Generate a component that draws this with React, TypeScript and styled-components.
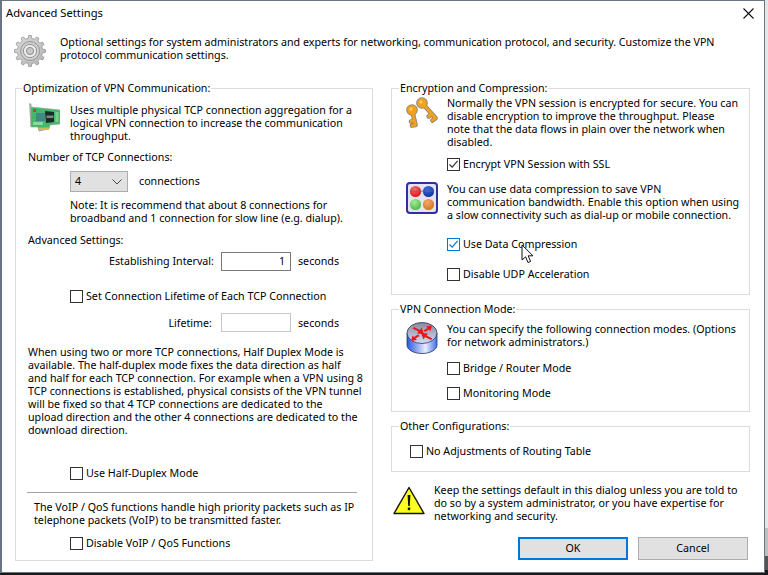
import React from "react";
import styled, { createGlobalStyle } from "styled-components";

const Global = createGlobalStyle`
  html, body { margin: 0; padding: 0; background: #1a1a1a; }
  * { box-sizing: border-box; }
`;

const Desktop = styled.div`
  width: 768px;
  height: 575px;
  overflow: hidden;
  position: relative;
  background:
    linear-gradient(to bottom, #e6e6e6 0, #e6e6e6 528px, #c0c0c0 528px, #c0c0c0 556px, #555 556px, #555 570px, #1a1a1a 570px)
      right top / 3px 100% no-repeat,
    #1a1a1a;
  font-family: "Noto Sans", "Open Sans", sans-serif;
  font-size: 10.7px;
  line-height: 13px;
  color: #000;
`;

const Window = styled.div`
  width: 765px;
  height: 573px;
  background: #fff;
  border: 1px solid #6a7482;
  border-left-width: 2px;
  display: flex;
  flex-direction: column;
`;

const TitleBar = styled.div`
  height: 27px;
  padding: 5px 10px 0 4px;
  display: flex;
  justify-content: space-between;
  align-items: flex-start;
  font-size: 11.2px;
`;

const CloseIcon = styled.svg`
  width: 11px;
  height: 11px;
  margin: 2px 0 0;
`;

const Intro = styled.div`
  display: flex;
  padding-left: 12px;
  gap: 14px;
  height: 32px;
  margin-top: 7px;
`;

const Text = styled.div<{ $top?: number; $left?: number }>`
  white-space: nowrap;
  margin-top: ${(p) => p.$top ?? 0}px;
  margin-left: ${(p) => p.$left ?? 0}px;
`;

const Columns = styled.div`
  display: grid;
  grid-template-columns: 358px 359px;
  column-gap: 18px;
  margin: 15px 0 0 13px;
`;

const Column = styled.div`
  display: flex;
  flex-direction: column;
`;

const Group = styled.fieldset<{ $grow?: boolean; $top?: number }>`
  margin: ${(p) => p.$top ?? 0}px 0 0;
  padding: 0;
  border: 1px solid #dcdcdc;
  min-width: 0;
  height: ${(p) => (p.$grow ? "479px" : "auto")};
`;

const Legend = styled.legend<{ $indent?: number }>`
  margin-left: ${(p) => p.$indent ?? 7}px;
  padding: 0 1px;
  line-height: 13px;
  white-space: nowrap;
`;

const GroupBody = styled.div<{ $left: number; $bottom?: number }>`
  padding: 0 0 ${(p) => p.$bottom ?? 0}px ${(p) => p.$left}px;
`;

const IconRow = styled.div<{ $top: number; $gap?: number }>`
  display: flex;
  align-items: flex-start;
  gap: ${(p) => p.$gap ?? 10}px;
  margin-top: ${(p) => p.$top}px;
`;

const Icon = styled.svg`
  width: 32px;
  height: 32px;
  flex: none;
`;

const CheckRow = styled.label<{ $top: number; $left: number }>`
  display: flex;
  align-items: center;
  gap: 3px;
  height: 14px;
  margin-top: ${(p) => p.$top}px;
  margin-left: ${(p) => p.$left}px;
  white-space: nowrap;
`;

const Box = styled.span<{ $hot?: boolean }>`
  width: 13px;
  height: 13px;
  flex: none;
  border: 1px solid ${(p) => (p.$hot ? "#0078d7" : "#333")};
  color: ${(p) => (p.$hot ? "#0078d7" : "#333")};
  background: #fff;
  display: flex;
`;

const FieldRow = styled.div<{ $top: number; $left?: number }>`
  display: flex;
  align-items: center;
  height: ${(p) => (p.$left ? "auto" : "19px")};
  margin-top: ${(p) => p.$top}px;
  margin-left: ${(p) => p.$left ?? 0}px;
  white-space: nowrap;
`;

const FieldLabel = styled.span<{ $width: number; $drop?: number }>`
  width: ${(p) => p.$width}px;
  margin-top: ${(p) => p.$drop ?? 0}px;
  text-align: right;
`;

const Unit = styled.span<{ $drop?: number }>`
  margin-top: ${(p) => p.$drop ?? 0}px;
`;

const Input = styled.div<{ $disabled?: boolean; $left: number }>`
  width: 70px;
  height: 19px;
  margin: 0 7px 0 ${(p) => p.$left}px;
  border: 1px solid ${(p) => (p.$disabled ? "#c6c6c6" : "#7a7a7a")};
  padding: 0 5px;
  line-height: 17px;
  text-align: right;
`;

const Select = styled.div`
  width: 58px;
  height: 21px;
  margin-right: 11px;
  border: 1px solid #adadad;
  background: #e1e1e1;
  display: flex;
  align-items: center;
  justify-content: space-between;
  padding: 0 5px 0 4px;
`;

const Chevron = styled.svg`
  width: 10px;
  height: 6px;
`;

const Separator = styled.hr`
  width: 330px;
  height: 1px;
  border: 0;
  background: #a0a0a0;
  margin: 12px 0 0 -1px;
`;

const Warning = styled.div`
  display: flex;
  gap: 9px;
  margin: 12px 0 0 2px;
`;

const WarningIcon = styled.svg`
  width: 32px;
  height: 29px;
  margin-top: 2px;
  flex: none;
`;

const Buttons = styled.div`
  display: flex;
  justify-content: flex-end;
  gap: 10px;
  margin: 14px 2px 0 0;
`;

const Button = styled.button<{ $primary?: boolean }>`
  width: 110px;
  height: 23px;
  padding: 0;
  background: #e1e1e1;
  border: ${(p) => (p.$primary ? "2px solid #0078d7" : "1px solid #adadad")};
  font: inherit;
  color: inherit;
`;

const Cursor = styled.svg`
  position: absolute;
  left: 521px;
  top: 244px;
  width: 14px;
  height: 21px;
`;

const Check = () => (
  <svg width="11" height="11" viewBox="0 0 11 11">
    <path d="M1.5 5.5 L4.2 8.2 L9.6 1.8" fill="none" stroke="currentColor" strokeWidth="1.2" />
  </svg>
);

const CheckBox = ({ on, hot, children, top, left }: { on?: boolean; hot?: boolean; children: React.ReactNode; top: number; left: number }) => (
  <CheckRow $top={top} $left={left}>
    <Box $hot={hot}>{on && <Check />}</Box>
    {children}
  </CheckRow>
);

const gearPath = (() => {
  const cx = 16, cy = 16, n = 12, R = 15.5, r = 12.6;
  let d = "";
  for (let i = 0; i < n; i++) {
    const a = (i / n) * Math.PI * 2;
    const s = (Math.PI * 2) / n;
    const pts: [number, number][] = [
      [r, a - s * 0.5],
      [r, a - s * 0.28],
      [R, a - s * 0.17],
      [R, a + s * 0.17],
      [r, a + s * 0.28],
    ];
    pts.forEach(([rad, ang], j) => {
      d += `${i === 0 && j === 0 ? "M" : "L"}${(cx + rad * Math.cos(ang)).toFixed(2)} ${(cy + rad * Math.sin(ang)).toFixed(2)} `;
    });
  }
  return d + "Z";
})();

const GearIcon = () => (
  <Icon viewBox="0 0 32 32">
    <defs>
      <linearGradient id="gearFill" x1="0" y1="0" x2="1" y2="1">
        <stop offset="0" stopColor="#dcdcdc" />
        <stop offset="1" stopColor="#b4b4b4" />
      </linearGradient>
    </defs>
    <path d={gearPath} fill="url(#gearFill)" stroke="#8a8a8a" strokeWidth="0.7" />
    <circle cx="16" cy="16" r="9.5" fill="#cfcfcf" stroke="#969696" strokeWidth="1" />
    <circle cx="16" cy="16" r="6.6" fill="#ececec" stroke="#929292" strokeWidth="1" />
    <circle cx="16" cy="16" r="3.6" fill="#c8c8c8" stroke="#8e8e8e" strokeWidth="1" />
  </Icon>
);

const NicIcon = () => (
  <Icon viewBox="0 0 32 32">
    <path d="M1 0 L3.5 1 L4 24 L2.5 24 Z" fill="#b0b0a8" />
    <path d="M3 4 L32 7 L32 21 L22 22 L21 26 L11 28 L10 24 L3 24 Z" fill="#48b56c" stroke="#93a396" strokeWidth="0.6" />
    <rect x="5" y="6" width="3" height="3" fill="#b84a3a" />
    <rect x="8" y="10" width="9" height="8" fill="#3f8a82" />
    <path d="M17 8 L26 9 L26 19 L18 20 Z" fill="#1e2a28" />
    <rect x="18.5" y="12.5" width="7" height="2.5" fill="#7d897e" />
    <rect x="5" y="19" width="10" height="3" fill="#8fd6a0" />
    <rect x="11" y="24.5" width="10" height="2.5" fill="#d8b84a" />
    <rect x="27.5" y="9" width="3" height="10" fill="#7fcf90" />
  </Icon>
);

const Key = ({ hx, hy, ex, ey }: { hx: number; hy: number; ex: number; ey: number }) => {
  const mx = hx + (ex - hx) * 0.72;
  const my = hy + (ey - hy) * 0.72;
  const tx = ex > hx + 6 ? -3 : -3.5;
  const ty = ex > hx + 6 ? 2.6 : 0.6;
  return (
    <g fill="none" strokeLinecap="round">
      <path d={`M${hx} ${hy} L${ex} ${ey} M${mx} ${my} l${tx} ${ty} M${ex} ${ey} l${tx} ${ty}`} stroke="#8d857a" strokeWidth="4.6" />
      <circle cx={hx} cy={hy} r="5.8" fill="#8d857a" />
      <path d={`M${hx} ${hy} L${ex} ${ey} M${mx} ${my} l${tx} ${ty} M${ex} ${ey} l${tx} ${ty}`} stroke="#f2a21e" strokeWidth="2.8" />
      <circle cx={hx} cy={hy} r="4.8" fill="#f2a21e" />
      <circle cx={hx - 1} cy={hy - 1} r="1.5" fill="#ffd468" />
    </g>
  );
};

const KeysIcon = () => (
  <Icon viewBox="0 0 32 32">
    <Key hx={6} hy={14} ex={9.5} ey={29} />
    <Key hx={16} hy={7} ex={29.5} ey={22} />
  </Icon>
);

const CompressIcon = () => (
  <Icon viewBox="0 0 32 32">
    <defs>
      <radialGradient id="sr" cx=".4" cy=".3" r=".8"><stop offset="0" stopColor="#ff6a6a" /><stop offset="1" stopColor="#d80808" /></radialGradient>
      <radialGradient id="sb" cx=".4" cy=".3" r=".8"><stop offset="0" stopColor="#3a6ae0" /><stop offset="1" stopColor="#0c2c98" /></radialGradient>
      <radialGradient id="sg" cx=".4" cy=".3" r=".8"><stop offset="0" stopColor="#a0ec90" /><stop offset="1" stopColor="#48b048" /></radialGradient>
      <radialGradient id="so" cx=".4" cy=".3" r=".8"><stop offset="0" stopColor="#f8a860" /><stop offset="1" stopColor="#c87020" /></radialGradient>
    </defs>
    <rect x="1" y="1" width="30" height="30" rx="3" fill="#e4e4ee" stroke="#30309a" strokeWidth="2" />
    <circle cx="9.5" cy="9.5" r="5.6" fill="url(#sr)" />
    <circle cx="22.5" cy="9.5" r="5.6" fill="url(#sb)" />
    <circle cx="9.5" cy="22.5" r="5.6" fill="url(#sg)" />
    <circle cx="22.5" cy="22.5" r="5.6" fill="url(#so)" />
    <rect x="4" y="8.5" width="24" height="1.4" fill="#6a6a72" opacity=".55" />
  </Icon>
);

const RouterIcon = () => (
  <Icon viewBox="0 0 32 32">
    <defs>
      <linearGradient id="rside" x1="0" y1="0" x2="1" y2="0">
        <stop offset="0" stopColor="#2a56e0" />
        <stop offset=".62" stopColor="#e8eeff" />
        <stop offset="1" stopColor="#3f6fe8" />
      </linearGradient>
      <linearGradient id="rtop" x1="0" y1="0" x2="0" y2="1">
        <stop offset="0" stopColor="#85899c" />
        <stop offset="1" stopColor="#d4dcf8" />
      </linearGradient>
    </defs>
    <path d="M1 11 L1 23 C1 28 8 31.5 16 31.5 C24 31.5 31 28 31 23 L31 11 Z" fill="url(#rside)" stroke="#2c3660" strokeWidth="0.8" />
    <ellipse cx="16" cy="11" rx="15" ry="10.5" fill="url(#rtop)" stroke="#2c3660" strokeWidth="0.8" />
    <g fill="#f01414">
      <path d="M8 5 L14 8 L15.5 5.5 L18 12 L11 11.5 L12.5 9.5 L6.5 6.5 Z" />
      <path d="M26 3.5 L24.5 9 L23 7.5 L19 10 L17.5 8.5 L21.5 6 L20 4.5 Z" />
      <path d="M25 18 L19 15 L17.5 17.5 L15 11 L22 11.5 L20.5 13.5 L26.5 16.5 Z" />
      <path d="M5 19 L6.5 13.5 L8 15 L12 12.5 L13.5 14 L9.5 16.5 L11 18 Z" />
    </g>
  </Icon>
);

export default function App() {
  return (
    <Desktop>
      <Global />
      <Window>
        <TitleBar>
          <span>Advanced Settings</span>
          <CloseIcon viewBox="0 0 11 11">
            <path d="M0.5 0.5 L10.5 10.5 M10.5 0.5 L0.5 10.5" stroke="#111" strokeWidth="1.1" fill="none" />
          </CloseIcon>
        </TitleBar>
        <Intro>
          <GearIcon />
          <Text $top={1}>
            Optional settings for system administrators and experts for networking, communication protocol, and security. Customize the VPN
            <br />
            protocol communication settings.
          </Text>
        </Intro>
        <Columns>
          <Column>
            <Group $grow>
              <Legend $indent={6}>Optimization of VPN Communication:</Legend>
              <GroupBody $left={12}>
                <IconRow $top={8}>
                  <NicIcon />
                  <Text $top={1}>
                    Uses multiple physical TCP connection aggregation for a
                    <br />
                    logical VPN connection to increase the communication
                    <br />
                    throughput.
                  </Text>
                </IconRow>
                <Text $top={8}>Number of TCP Connections:</Text>
                <FieldRow $top={7} $left={42}>
                  <Select>
                    <span>4</span>
                    <Chevron viewBox="0 0 10 6">
                      <path d="M0.5 0.5 L5 5 L9.5 0.5" stroke="#444" strokeWidth="1" fill="none" />
                    </Chevron>
                  </Select>
                  connections
                </FieldRow>
                <Text $top={7} $left={42}>
                  Note: It is recommend that about 8 connections for
                  <br />
                  broadband and 1 connection for slow line (e.g. dialup).
                </Text>
                <Text $top={9}>Advanced Settings:</Text>
                <FieldRow $top={5}>
                  <FieldLabel $width={186}>Establishing Interval:</FieldLabel>
                  <Input $left={7}>1</Input>
                  <Unit>seconds</Unit>
                </FieldRow>
                <CheckBox top={18} left={42}>Set Connection Lifetime of Each TCP Connection</CheckBox>
                <FieldRow $top={10}>
                  <FieldLabel $width={184} $drop={2}>Lifetime:</FieldLabel>
                  <Input $disabled $left={9} />
                  <Unit $drop={2}>seconds</Unit>
                </FieldRow>
                <Text $top={14}>
                  When using two or more TCP connections, Half Duplex Mode is
                  <br />
                  available. The half-duplex mode fixes the data direction as half
                  <br />
                  and half for each TCP connection. For example when a VPN using 8
                  <br />
                  TCP connections is established, physical consists of the VPN tunnel
                  <br />
                  will be fixed so that 4 TCP connections are dedicated to the
                  <br />
                  upload direction and the other 4 connections are dedicated to the
                  <br />
                  download direction.
                </Text>
                <CheckBox top={29} left={42}>Use Half-Duplex Mode</CheckBox>
                <Separator />
                <Text $top={8} $left={6}>
                  The VoIP / QoS functions handle high priority packets such as IP
                  <br />
                  telephone packets (VoIP) to be transmitted faster.
                </Text>
                <CheckBox top={9} left={42}>Disable VoIP / QoS Functions</CheckBox>
              </GroupBody>
            </Group>
          </Column>
          <Column>
            <Group>
              <Legend>Encryption and Compression:</Legend>
              <GroupBody $left={14} $bottom={13}>
                <IconRow $top={1} $gap={9}>
                  <KeysIcon />
                  <Text $top={1}>
                    Normally the VPN session is encrypted for secure. You can
                    <br />
                    disable encryption to improve the throughput. Please
                    <br />
                    note that the data flows in plain over the network when
                    <br />
                    disabled.
                  </Text>
                </IconRow>
                <CheckBox on top={8} left={41}>Encrypt VPN Session with SSL</CheckBox>
                <IconRow $top={11} $gap={9}>
                  <CompressIcon />
                  <Text $top={1}>
                    You can use data compression to save VPN
                    <br />
                    communication bandwidth. Enable this option when using
                    <br />
                    a slow connectivity such as dial-up or mobile connection.
                  </Text>
                </IconRow>
                <CheckBox on hot top={15} left={41}>Use Data Compression</CheckBox>
                <CheckBox top={16} left={41}>Disable UDP Acceleration</CheckBox>
              </GroupBody>
            </Group>
            <Group $top={8}>
              <Legend>VPN Connection Mode:</Legend>
              <GroupBody $left={14} $bottom={11}>
                <IconRow $top={6} $gap={9}>
                  <RouterIcon />
                  <Text $top={1}>
                    You can specify the following connection modes. (Options
                    <br />
                    for network administrators.)
                  </Text>
                </IconRow>
                <CheckBox top={7} left={41}>Bridge / Router Mode</CheckBox>
                <CheckBox top={11} left={41}>Monitoring Mode</CheckBox>
              </GroupBody>
            </Group>
            <Group $top={8}>
              <Legend>Other Configurations:</Legend>
              <GroupBody $left={18} $bottom={13}>
                <CheckBox top={11} left={0}>No Adjustments of Routing Table</CheckBox>
              </GroupBody>
            </Group>
            <Warning>
              <WarningIcon viewBox="0 0 32 29">
                <path d="M16 1.5 L31 27.5 L1 27.5 Z" fill="#ffff20" stroke="#111" strokeWidth="1.4" strokeLinejoin="round" />
                <path d="M14.6 9 L17.4 9 L16.8 20 L15.2 20 Z" fill="#111" />
                <rect x="14.8" y="21.5" width="2.4" height="2.6" fill="#111" />
              </WarningIcon>
              <Text>
                Keep the settings default in this dialog unless you are told to
                <br />
                do so by a system administrator, or you have expertise for
                <br />
                networking and security.
              </Text>
            </Warning>
            <Buttons>
              <Button $primary>OK</Button>
              <Button>Cancel</Button>
            </Buttons>
          </Column>
        </Columns>
      </Window>
      <Cursor viewBox="0 0 14 21">
        <path d="M1 1 L1 16 L4.6 12.8 L7 18.6 L9.6 17.4 L7.2 11.8 L12 11.8 Z" fill="#fff" stroke="#111" strokeWidth="1" strokeLinejoin="round" />
      </Cursor>
    </Desktop>
  );
}
